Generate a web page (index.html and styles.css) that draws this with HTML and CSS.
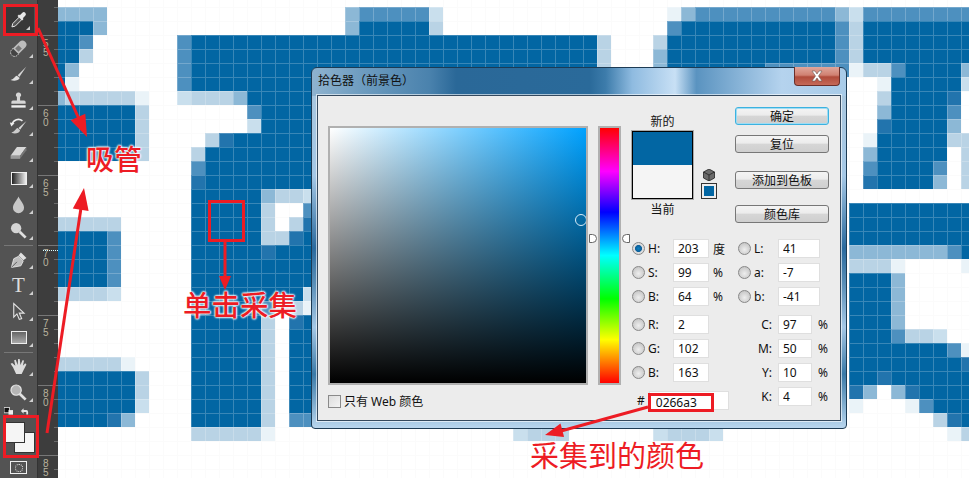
FILE: index.html
```html
<!DOCTYPE html>
<html lang="zh">
<head>
    <meta charset="UTF-8">
    <title>拾色器</title>
    <link rel="stylesheet" href="styles.css">
</head>
<body>
<div class="stage">
    <!-- tools -->
    <div class="tools">
        <div class="tool selected"><svg viewBox="0 0 24 24"><path d="M3.5 21.5l1-4 8.5-8.5 3 3-8.5 8.5z" fill="#555" stroke="#e6e6e6" stroke-width="1.2"/><path d="M12 6.5l1 1 3-3a2.4 2.4 0 013.5 3.5l-3 3 1 1-1.800 1.800-5.500-5.500z" fill="#e8e8e8"/></svg></div>
        <div class="tool"><svg viewBox="0 0 24 24"><g transform="rotate(-45 12 12)"><rect x="0" y="7" width="24" height="10" rx="5" fill="#bdbdbd"/><path d="M7 7H5a5 5 0 000 10h2" fill="#444" stroke="#eee" stroke-dasharray="1.500 1.500"/><rect x="9" y="9" width="6" height="6" fill="#777"/></g></svg></div>
        <div class="tool"><svg viewBox="0 0 24 24"><path d="M22 2L11 13l2 2z" fill="#d8d8d8"/><path d="M10 13.500c-3 .5-3 4-8 5.500 4 2 10 1 11.500-2.500z" fill="#e0e0e0"/></svg></div>
        <div class="tool"><svg viewBox="0 0 24 24"><path d="M12 2a3 3 0 012 5.500V12h5a2 2 0 012 2v2H3v-2a2 2 0 012-2h5V7.500A3 3 0 0112 2z" fill="#d6d6d6"/><rect x="3" y="18" width="18" height="3" fill="#f0f0f0"/></svg></div>
        <div class="tool"><svg viewBox="0 0 24 24"><path d="M4 9a8 8 0 0113-4" fill="none" stroke="#eee" stroke-width="2"/><path d="M1 7l6 1-4 4z" fill="#eee"/><path d="M22 5L12 14l2 2z" fill="#d8d8d8"/><path d="M11 14c-3 1-3 4-8 6 4 1.500 10 1 11-3z" fill="#ccc"/></svg></div>
        <div class="tool"><svg viewBox="0 0 24 24"><path d="M10 5h12l-8 11H2z" fill="#d8d8d8"/><path d="M2 16h12v4H2z" fill="#9a9a9a"/><path d="M14 16l8-11v4l-8 11z" fill="#777"/></svg></div>
        <div class="tool"><div class="grad-icon"></div></div>
        <div class="tool"><svg viewBox="0 0 24 24"><path d="M12 2c2 5 7 9 7 14a7 7 0 01-14 0c0-5 5-9 7-14z" fill="#c8c8c8"/></svg></div>
        <div class="tool"><svg viewBox="0 0 24 24"><circle cx="9" cy="9" r="6.500" fill="#d4d4d4"/><path d="M13.500 13.500L21 21" stroke="#e0e0e0" stroke-width="3.500"/></svg></div>
        <div class="sep"></div>
        <div class="tool"><svg viewBox="0 0 24 24"><path d="M3 22l3-11 6-3 6 6-3 6z" fill="#bcbcbc" stroke="#eee"/><path d="M3 22l7-7" stroke="#444"/><path d="M12 7l3-4 7 7-4 3z" fill="#e0e0e0"/></svg></div>
        <div class="tool type-tool">T</div>
        <div class="tool"><svg viewBox="0 0 24 24"><path d="M6 2v17l4-4 3 7 3-1-3-7h6z" fill="#555" stroke="#e4e4e4" stroke-width="1.400"/></svg></div>
        <div class="tool"><div class="rect-icon"></div></div>
        <div class="sep"></div>
        <div class="tool"><svg viewBox="0 0 24 24"><path d="M5 13L2 8.500l2-1 4 3.500L6.500 4l2-.5L11 10 11.500 2.500h2L14.500 10 17 4l2 .5L17.500 11l3-3 1.500 1.500-4 8-2 4H9z" fill="#dcdcdc"/></svg></div>
        <div class="tool"><svg viewBox="0 0 24 24"><circle cx="9" cy="9" r="6.500" fill="#b5b5b5" stroke="#e4e4e4" stroke-width="1.500"/><path d="M13.500 13.500L21 21" stroke="#e0e0e0" stroke-width="3.500"/></svg></div>
        <div class="color-tools">
            <div class="mini-swaps">
                <svg class="mini" viewBox="0 0 10 8"><rect x="0" y="0" width="6" height="6" fill="#111" stroke="#ddd"/><rect x="5" y="3" width="5" height="5" fill="#eee"/></svg>
                <svg class="mini" viewBox="0 0 10 8"><path d="M1 4l3-3v2h3a2 2 0 012 2v3H7V5H4v2z" fill="#e4e4e4"/></svg>
            </div>
            <div class="swatches">
                <div class="swatch back"></div>
                <div class="swatch front"></div>
            </div>
        </div>
        <div class="mask-icon"><span></span></div>
    </div>

    <!-- ruler -->
    <div class="ruler">
        <div class="ruler-top"></div>
        <div class="ruler-seg">5<br>5</div>
        <div class="ruler-seg">6<br>0</div>
        <div class="ruler-seg">6<br>5</div>
        <div class="ruler-seg">7<br>0</div>
        <div class="ruler-seg">7<br>5</div>
        <div class="ruler-seg">8<br>0</div>
        <div class="ruler-seg last">8<br>5</div>
        <div class="ruler-mark"></div>
    </div>

    <!-- pixel picture, filled by mosaic.js -->
    <div class="canvas"><div class="mosaic" id="mosaic"></div></div>
</div>

<!-- color picker window -->
<div class="dialog">
    <div class="title-bar">
        <span class="title">拾色器（前景色）</span>
        <div class="close"><svg viewBox="0 0 14 12"><path d="M2 1h3l2 3 2-3h3L8.500 6 12 11H9L7 8l-2 3H2l3.500-5z" fill="#fff" stroke="#6d5a55" stroke-width=".6"/></svg></div>
    </div>
    <div class="body">
        <div class="col-picker">
            <div class="field-sv"><span class="sv-marker"></span></div>
            <label class="web-only"><span class="check"></span>只有 Web 颜色</label>
        </div>
        <div class="hue-wrap">
            <span class="hue-arrow left"></span>
            <div class="hue"></div>
            <span class="hue-arrow right"></span>
        </div>
        <div class="col-right">
            <div class="top-part">
                <div class="preview">
                    <div class="cap">新的</div>
                    <div class="swatch-box"><div class="new"></div><div class="cur"></div></div>
                    <div class="cap">当前</div>
                </div>
                <div class="gamut">
                    <svg viewBox="0 0 12 12"><path d="M6 0l5.500 3v6L6 12 .5 9V3z" fill="#6a6a6a" stroke="#222" stroke-width=".8"/><path d="M.5 3L6 6l5.500-3M6 6v6" fill="none" stroke="#222" stroke-width=".8"/></svg>
                    <div class="web-chip"></div>
                </div>
                <div class="buttons">
                    <button class="btn primary">确定</button>
                    <button class="btn">复位</button>
                    <button class="btn add">添加到色板</button>
                    <button class="btn lib">颜色库</button>
                </div>
            </div>
            <div class="fields">
                <div class="list hsb">
                    <div class="row"><span class="radio on"></span><span>H:</span><input value="203"><span>度</span></div>
                    <div class="row"><span class="radio"></span><span>S:</span><input value="99"><span>%</span></div>
                    <div class="row"><span class="radio"></span><span>B:</span><input value="64"><span>%</span></div>
                    <div class="row gap"><span class="radio"></span><span>R:</span><input value="2"></div>
                    <div class="row"><span class="radio"></span><span>G:</span><input value="102"></div>
                    <div class="row"><span class="radio"></span><span>B:</span><input value="163"></div>
                    <div class="hex-row"><span>#</span><input value="0266a3"></div>
                </div>
                <div class="list lab">
                    <div class="row"><span class="radio"></span><span>L:</span><input value="41"></div>
                    <div class="row"><span class="radio"></span><span>a:</span><input value="-7"></div>
                    <div class="row"><span class="radio"></span><span>b:</span><input value="-41"></div>
                    <div class="row gap cmyk"><span class="cmyk-label">C:</span><input value="97"><span>%</span></div>
                    <div class="row cmyk"><span class="cmyk-label">M:</span><input value="50"><span>%</span></div>
                    <div class="row cmyk"><span class="cmyk-label">Y:</span><input value="10"><span>%</span></div>
                    <div class="row cmyk"><span class="cmyk-label">K:</span><input value="4"><span>%</span></div>
                </div>
            </div>
        </div>
    </div>
</div>

<!-- red notes on top of everything -->
<svg class="notes" viewBox="0 0 969 478">
    <g fill="none" stroke="#ed1c24" stroke-width="3">
        <rect x="4.500" y="5.500" width="32" height="29"/>
        <rect x="4.500" y="416.500" width="33" height="40"/>
        <rect x="209.500" y="201.500" width="34" height="39"/>
        <rect x="649.500" y="394.500" width="63" height="16"/>
        <path d="M38 28L79 119"/>
        <path d="M47 433L81 208"/>
        <path d="M225 241V278"/>
        <path d="M648 407L561 431"/>
    </g>
    <g fill="#ed1c24">
        <polygon points="87,137 85.300,113.700 70.700,120.300"/>
        <polygon points="84,188 88.600,210.900 72.800,208.500"/>
        <polygon points="225,290 219,276 231,276"/>
        <polygon points="545,435 564.100,437 560.500,423.600"/>
    </g>
</svg>
<span class="note n-dropper">吸管</span>
<span class="note n-click">单击采集</span>
<span class="note n-result">采集到的颜色</span>

<script src="mosaic.js"></script>
</body>
</html>
```

FILE: styles.css
```css
* {
  box-sizing: border-box;
}

html, body {
  margin: 0;
  padding: 0;
  height: 100%;
  overflow: hidden;
}

body {
  position: relative;
  width: 969px;
  height: 478px;
  background: #fff;
  font-family: "Noto Sans", "Noto Sans CJK SC", sans-serif;
  font-size: 12px;
  color: #111;
}

.stage {
  display: flex;
  height: 478px;
  overflow: hidden;
}

/* tools */
.tools {
  width: 38px;
  height: 478px;
  flex: none;
  padding-top: 5px;
  background: #535353;
  border-right: 1px solid #333;
}

.tool {
  position: relative;
  height: 26px;
  display: flex;
  align-items: center;
  justify-content: center;
}

.tool svg {
  width: 19px;
  height: 19px;
}

.tool::after {
  content: "";
  position: absolute;
  right: 4px;
  bottom: 3px;
  border-left: 4px solid transparent;
  border-bottom: 4px solid #cfcfcf;
}

.tool.selected {
  height: 28px;
  margin: 0 3px 2px 4px;
  background: #383838;
}

.tool.selected svg {
  width: 20px;
  height: 20px;
}

.sep {
  height: 1px;
  margin: 2px 4px 0;
  background: #777;
}

.type-tool {
  font-family: "Liberation Serif", serif;
  font-size: 21px;
  color: #ddd;
}

.grad-icon, .rect-icon {
  width: 16px;
  height: 13px;
  border: 1px solid #eee;
}

.grad-icon {
  background: linear-gradient(to right, #222, #eee);
}

.rect-icon {
  background: linear-gradient(to bottom, #666, #aaa);
}

.color-tools {
  padding: 2px 0 0 4px;
}

.mini-swaps {
  display: flex;
  gap: 7px;
  height: 9px;
}

.mini {
  width: 9px;
  height: 8px;
}

.swatches {
  position: relative;
  height: 31px;
  margin-top: 7px;
}

.swatch {
  position: absolute;
  width: 19px;
  height: 19px;
  background: #f5f5f5;
  border: 1px solid #f5f5f5;
  outline: 1px solid #333;
}

.swatch.front {
  left: 1px;
  top: 0;
}

.swatch.back {
  left: 11px;
  top: 10px;
}

.mask-icon {
  width: 17px;
  height: 13px;
  margin: 7px 0 0 10px;
  border: 1px solid #eee;
  display: flex;
  align-items: center;
  justify-content: center;
}

.mask-icon span {
  width: 8px;
  height: 8px;
  border: 1px dotted #eee;
  border-radius: 50%;
}

/* ruler */
.ruler {
  position: relative;
  width: 20px;
  height: 478px;
  flex: none;
  overflow: hidden;
  background:
    repeating-linear-gradient(to bottom, #6a6a6a 0, #6a6a6a 1px, transparent 1px, transparent 14px) right 7px / 4px 100% no-repeat,
    #3d3d3d;
}

.ruler-top {
  height: 35px;
}

.ruler-seg {
  height: 70px;
  padding: 3px 0 0 5px;
  border-top: 1px solid #777;
  font-family: "Liberation Sans", sans-serif;
  font-size: 10px;
  line-height: 9px;
  color: #b9b39f;
}

.ruler-seg.last {
  height: 23px;
}

.ruler-mark {
  position: absolute;
  left: 5px;
  right: 0;
  top: 250px;
  border-top: 1px dotted #dff;
}

/* pixels */
.canvas {
  flex: 1;
  height: 478px;
  overflow: hidden;
  background: #fff;
}

.mosaic {
  display: grid;
  grid-template-columns: repeat(66, 14px);
  grid-auto-rows: 14px;
  margin: -7px 0 0 -7px;
}

.px {
  box-shadow: inset 1px 1px 0 rgba(255, 255, 255, 0.22);
}

.px-w { box-shadow: inset 1px 1px 0 #fbfbfb; }
.px-a { background: #eaf3f8; }
.px-b { background: #c9dfed; }
.px-c { background: #b9d3e5; }
.px-d { background: #8cb8d6; }
.px-e { background: #4d90bf; }
.px-f { background: #2274ad; }
.px-g { background: #0266a3; }

/* dialog */
.dialog {
  position: absolute;
  left: 311px;
  top: 67px;
  width: 536px;
  height: 362px;
  padding: 0 5px 7px;
  display: flex;
  flex-direction: column;
  border: 1px solid #1d3b54;
  border-radius: 6px 6px 4px 4px;
  background:
    linear-gradient(to right, #8fb3cf 0, #6f9dc0 9%, #4a82ad 22%, #2a6898 27%, #2a6a9a 52%, #3d7cab 55%, #8fbbe0 60%, #c8e0f5 68%, #5a93c0 72%, #b5d3ee 88%, #a8cbe8 100%) top / 100% 28px no-repeat,
    linear-gradient(to bottom, #a9c6dc 0, #a5c8e6 30%, #2a6a9e 50%, #5a8fb8 60%, #a5c8e6 72%, #3a7aa8 85%, #b9d6ee 100%);
}

.title-bar {
  position: relative;
  height: 27px;
  flex: none;
}

.title {
  display: block;
  padding: 5px 0 0 1px;
  line-height: 16px;
}

.close {
  position: absolute;
  top: -1px;
  right: 1px;
  width: 46px;
  height: 19px;
  display: flex;
  align-items: center;
  justify-content: center;
  border: 1px solid #6b2f2a;
  border-top: none;
  border-radius: 0 0 4px 4px;
  background: linear-gradient(to bottom, #e0a79c 0, #d08172 45%, #b04b3b 55%, #c56a59 100%);
}

.close svg {
  width: 14px;
  height: 12px;
}

.body {
  flex: 1;
  display: flex;
  background: #ececec;
  border: 1px solid #34495e;
  outline: 1px solid rgba(255, 255, 255, 0.6);
  padding-left: 10px;
}

.col-picker {
  width: 260px;
  padding-top: 30px;
  flex: none;
}

.field-sv {
  position: relative;
  height: 259px;
  overflow: hidden;
  border: 2px solid #b0b0b0;
  background:
    linear-gradient(to bottom, transparent, #000),
    linear-gradient(to right, #fff, #00a2ff);
}

.sv-marker {
  position: absolute;
  left: 245px;
  top: 86px;
  width: 12px;
  height: 12px;
  border-radius: 50%;
  border: 1px solid #d8ecf8;
}

.web-only {
  display: flex;
  align-items: center;
  height: 14px;
  margin-top: 9px;
  gap: 3px;
}

.check {
  width: 13px;
  height: 13px;
  border: 1px solid #8a8a8a;
  background: linear-gradient(135deg, #ddd, #f4f4f4);
}

.hue-wrap {
  position: relative;
  width: 23px;
  margin: 30px 11px 0 10px;
  height: 259px;
  flex: none;
}

.hue {
  height: 100%;
  border: 2px solid #b0b0b0;
  background: linear-gradient(to bottom, #f00, #f0f 17%, #00f 33%, #0ff 50%, #0f0 67%, #ff0 83%, #f00);
}

.hue-arrow {
  position: absolute;
  top: 108px;
  width: 8px;
  height: 9px;
  background: #fff;
  border: 1px solid #666;
}

.hue-arrow.left {
  left: -9px;
  border-radius: 0 5px 5px 0;
}

.hue-arrow.right {
  right: -9px;
  border-radius: 5px 0 0 5px;
}

.col-right {
  flex: 1;
}

.top-part {
  display: flex;
  height: 143px;
  padding-top: 11px;
}

.preview {
  width: 61px;
  padding-top: 8px;
  text-align: center;
}

.cap {
  height: 14px;
  line-height: 14px;
}

.swatch-box {
  height: 68px;
  margin: 2px 0 4px;
  border: 1px solid #000;
  outline: 1px solid #aaa;
}

.new {
  height: 33px;
  background: #0266a3;
}

.cur {
  height: 33px;
  background: #f5f5f5;
}

.gamut {
  width: 42px;
  padding: 62px 0 0 9px;
}

.gamut svg {
  display: block;
  width: 12px;
  height: 12px;
  margin-left: 1px;
}

.web-chip {
  width: 14px;
  height: 14px;
  margin-top: 3px;
  background: #0266a3;
  border: 2px solid #eee;
  outline: 1px solid #333;
}

.buttons {
  width: 94px;
}

.btn {
  display: block;
  width: 94px;
  height: 18px;
  margin: 0 0 10px;
  padding: 0;
  font: inherit;
  line-height: 15px;
  color: #111;
  border: 1px solid #777;
  border-radius: 3px;
  background: linear-gradient(to bottom, #f4f4f4 0, #ececec 45%, #d6d6d6 50%, #cfcfcf 100%);
}

.btn.primary {
  border-color: #3cb2e0;
  box-shadow: inset 0 0 0 1px #9fdcf3;
}

.btn.add {
  margin-top: 18px;
  margin-bottom: 16px;
}

.fields {
  display: flex;
}

.list.hsb {
  width: 106px;
}

.row {
  display: grid;
  grid-template-columns: 14px 27px 36px auto;
  column-gap: 0;
  align-items: center;
  height: 19px;
  margin-bottom: 5px;
}

.row input, .hex-row input {
  height: 19px;
  width: 100%;
  padding: 0 4px;
  border: 1px solid #dfdfdf;
  background: #fff;
  font: inherit;
  color: #111;
}

.row > span:nth-child(2) {
  padding-left: 2px;
}

.row > span:nth-child(4) {
  padding-left: 4px;
}

.row.gap {
  margin-top: 9px;
}

.radio {
  width: 13px;
  height: 13px;
  border-radius: 50%;
  border: 1px solid #888;
  background: radial-gradient(circle at 50% 60%, #eee, #bbb);
}

.radio.on {
  background: radial-gradient(circle, #0b7fc0 0, #0b5f9a 40%, #ddd 50%);
}

.hex-row {
  display: flex;
  align-items: center;
  gap: 4px;
  margin-top: 9px;
  padding-left: 5px;
}

.hex-row input {
  width: 80px;
  padding: 3px 0 0 6px;
}

.list.lab .row {
  grid-template-columns: 14px 26px 42px;
}

.list.lab .row.cmyk {
  grid-template-columns: 40px 34px auto;
}

.list.lab .row.cmyk > span {
  padding: 0;
}

.list.lab .row.cmyk .cmyk-label {
  text-align: right;
  padding-right: 6px;
}

.list.lab .row.cmyk > span:last-child {
  padding-left: 6px;
}

/* notes */
.notes {
  position: absolute;
  left: 0;
  top: 0;
  width: 969px;
  height: 478px;
  pointer-events: none;
}

.note {
  position: absolute;
  font-family: "Noto Sans CJK SC", sans-serif;
  font-size: 28px;
  font-weight: 500;
  line-height: 32px;
  color: #ed1c24;
  white-space: nowrap;
}

.n-dropper {
  left: 86px;
  top: 142px;
  text-shadow: 0 0 2px #fff, 0 0 2px #fff, 0 0 2px #fff, 0 0 3px #fff;
}

.n-click {
  left: 183px;
  top: 288px;
  font-size: 28.500px;
  text-shadow: 0 0 2px #fff, 0 0 2px #fff, 0 0 2px #fff, 0 0 3px #fff;
}

.n-result {
  left: 530px;
  top: 438px;
  font-size: 29px;
  font-weight: 400;
}
```

FILE: mosaic.js
```js
// one letter per 14px cell, . is white, a-g go from pale to full blue
var filas = [
  "",
  "dddd...... .......... .deeeeeb.. .......... ....adeeee eeeeeedbee eeeeee",
  "gggd...... .......... .dgggggc.. .......... ....eggggg ggggggecgg gggggg",
  "gge......e gggggggggg gggggggggg gggggggggc ...cgggggg ggggggecgg gggggg",
  "ggc......e gggggggggg gggggggggg gggggggggc ...dgggggg ggggggecgg gggggg",
  "gd.......e gggggggggg gggggggggg gggggggggc ...dgggggg geeeeeeacc eggggd",
  "ga.......e gggggggggg .......... .......... .......... .........a gggggb",
  "dccccca..b cccdgggggg .......... .......... .......... .........c ggggf.",
  "ggggggc... ....eggggg .......... .......... .......... .........d gggge.",
  "ggggggc... ....bggggg .......... .......... .......... .........f ggggd.",
  "ggggggc... .cfggggggg .......... .......... .......... ........ag ggggcc",
  "ggggggc... cggggggggg .......... .......... .......... ........dg gggg.c",
  ".......... eggggggggg .......... .......... .......... ........eg ggge.c",
  ".......... fggggggggg .......... .......... .......... ........fg gggd.c",
  ".......... gggggdccb. .......... .......... .......... .......... ......",
  ".......... gggggc..e. .......... .......... .......... .......ggg gggggg",
  "ccccc..... gggggc.cf. .......... .......... .......... .......ggg gggggg",
  "gggge..... gggggccfg. .......... .......... .......... .......ggg gggggg",
  "gggge..... gggggfggg. .......... .......... .......... .......ddd ddddeg",
  "gggge..... gggggggggg .......... .......... .......... .......ccc a....a",
  "gggge..... gggggggggg .......... .......... .......... .......ggg d.....",
  "ccccb..... ggggggggb. .......... .......... .......... .......ggg d.....",
  ".......... gggggecca. .......... .......... .......... .......ggg d.....",
  ".......... gggggc.fg. .......... .......... .......... .......ggg d.....",
  ".......... gggggc.gg. .......... .......... .......... .......ggg eccb..",
  ".......... gggggc.gg. .......... .......... .......... .......ggg ggggea",
  "ccccca.... gggggc.gg. .......... .......... .......... .......ggg gggggf",
  "ggggggc... gggggc.gg. .......... .......... .......... .......ggf gggggg",
  "ggggggc... gggggc.gg. .......... .......... .......... .......fd. dfgggg",
  "ggggggb... gggggc.gg. .......... .......... .......... .......a.. .aeggg",
  "ggggfd.... gggggc.ee. .......... .......... .......... .......... ...cfg",
  ".......... ccccca.... .......... ...bccc... ...bcccb.. .......... ....ac",
  "", "", ""
];

var mosaico = document.getElementById('mosaic');

filas.forEach(function(fila) {
  var celdas = fila.replace(/ /g, '');
  for (var i = 0; i < 66; i++) {
    var letra = celdas.charAt(i) || '.';
    var celda = document.createElement('div');
    celda.className = letra === '.' ? 'px-w' : 'px px-' + letra;
    mosaico.appendChild(celda);
  }
});
```
